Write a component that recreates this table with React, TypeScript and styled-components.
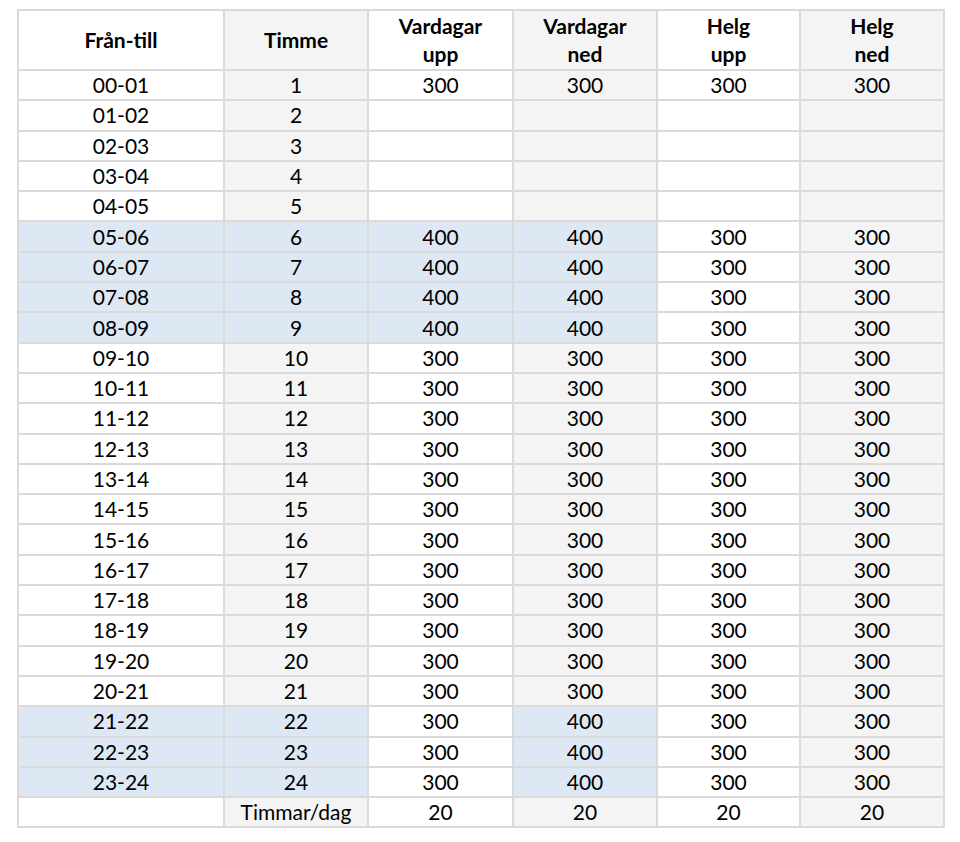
import React from "react";
import styled, { createGlobalStyle } from "styled-components";

const Global = createGlobalStyle`
  html, body { margin: 0; padding: 0; background: #ffffff; }
  body { font-family: Lato, "Open Sans", sans-serif; color: #000; }
`;

const Page = styled.div`
  padding: 9px 0 0 17px;
`;

const Table = styled.table`
  border-collapse: collapse;
  table-layout: fixed;
  width: 926px;
  font-family: Lato, "Open Sans", sans-serif;
  font-size: 21px;
`;

const HeadCell = styled.th<{ $shade: boolean }>`
  height: 58px;
  padding: 0;
  border: 2px solid #dadada;
  background: ${(p) => (p.$shade ? "#f4f4f4" : "#ffffff")};
  font-weight: 700;
  line-height: 28px;
  text-align: center;
  vertical-align: middle;
`;

const Row = styled.tr`
  height: 30.3px;
`;

const Cell = styled.td<{ $bg: string }>`
  padding: 0;
  border: 2px solid #dadada;
  background: ${(p) => p.$bg};
  text-align: center;
  vertical-align: middle;
  line-height: 26px;
  font-weight: 400;
`;

const widths = [206, 144, 145, 144, 143, 144];
const headers = [["Från-till"], ["Timme"], ["Vardagar", "upp"], ["Vardagar", "ned"], ["Helg", "upp"], ["Helg", "ned"]];

const WHITE = "#ffffff";
const GRAY = "#f4f4f4";
const BLUE = "#dde8f4";

type RowData = { cells: string[]; blue: boolean[] };

const pad = (n: number) => String(n).padStart(2, "0");

const rows: RowData[] = [];
for (let h = 0; h < 24; h++) {
  const from = `${pad(h)}-${pad(h + 1)}`;
  const hour = String(h + 1);
  let vu = "300", vn = "300", hu = "300", hn = "300";
  if (h >= 1 && h <= 4) { vu = ""; vn = ""; hu = ""; hn = ""; }
  const morning = h >= 5 && h <= 8;
  const evening = h >= 21;
  if (morning) { vu = "400"; vn = "400"; }
  if (evening) { vn = "400"; }
  rows.push({
    cells: [from, hour, vu, vn, hu, hn],
    blue: [morning || evening, morning || evening, morning, morning || evening, false, false],
  });
}
rows.push({ cells: ["", "Timmar/dag", "20", "20", "20", "20"], blue: [false, false, false, false, false, false] });

export default function App() {
  return (
    <>
      <Global />
      <Page>
        <Table>
          <colgroup>
            {widths.map((w, i) => (
              <col key={i} style={{ width: w }} />
            ))}
          </colgroup>
          <thead>
            <tr>
              {headers.map((lines, i) => (
                <HeadCell key={i} $shade={i % 2 === 1}>
                  {lines.map((l, j) => (
                    <div key={j}>{l}</div>
                  ))}
                </HeadCell>
              ))}
            </tr>
          </thead>
          <tbody>
            {rows.map((r, ri) => (
              <Row key={ri}>
                {r.cells.map((c, ci) => (
                  <Cell key={ci} $bg={r.blue[ci] ? BLUE : ci % 2 === 1 ? GRAY : WHITE}>
                    {c}
                  </Cell>
                ))}
              </Row>
            ))}
          </tbody>
        </Table>
      </Page>
    </>
  );
}
